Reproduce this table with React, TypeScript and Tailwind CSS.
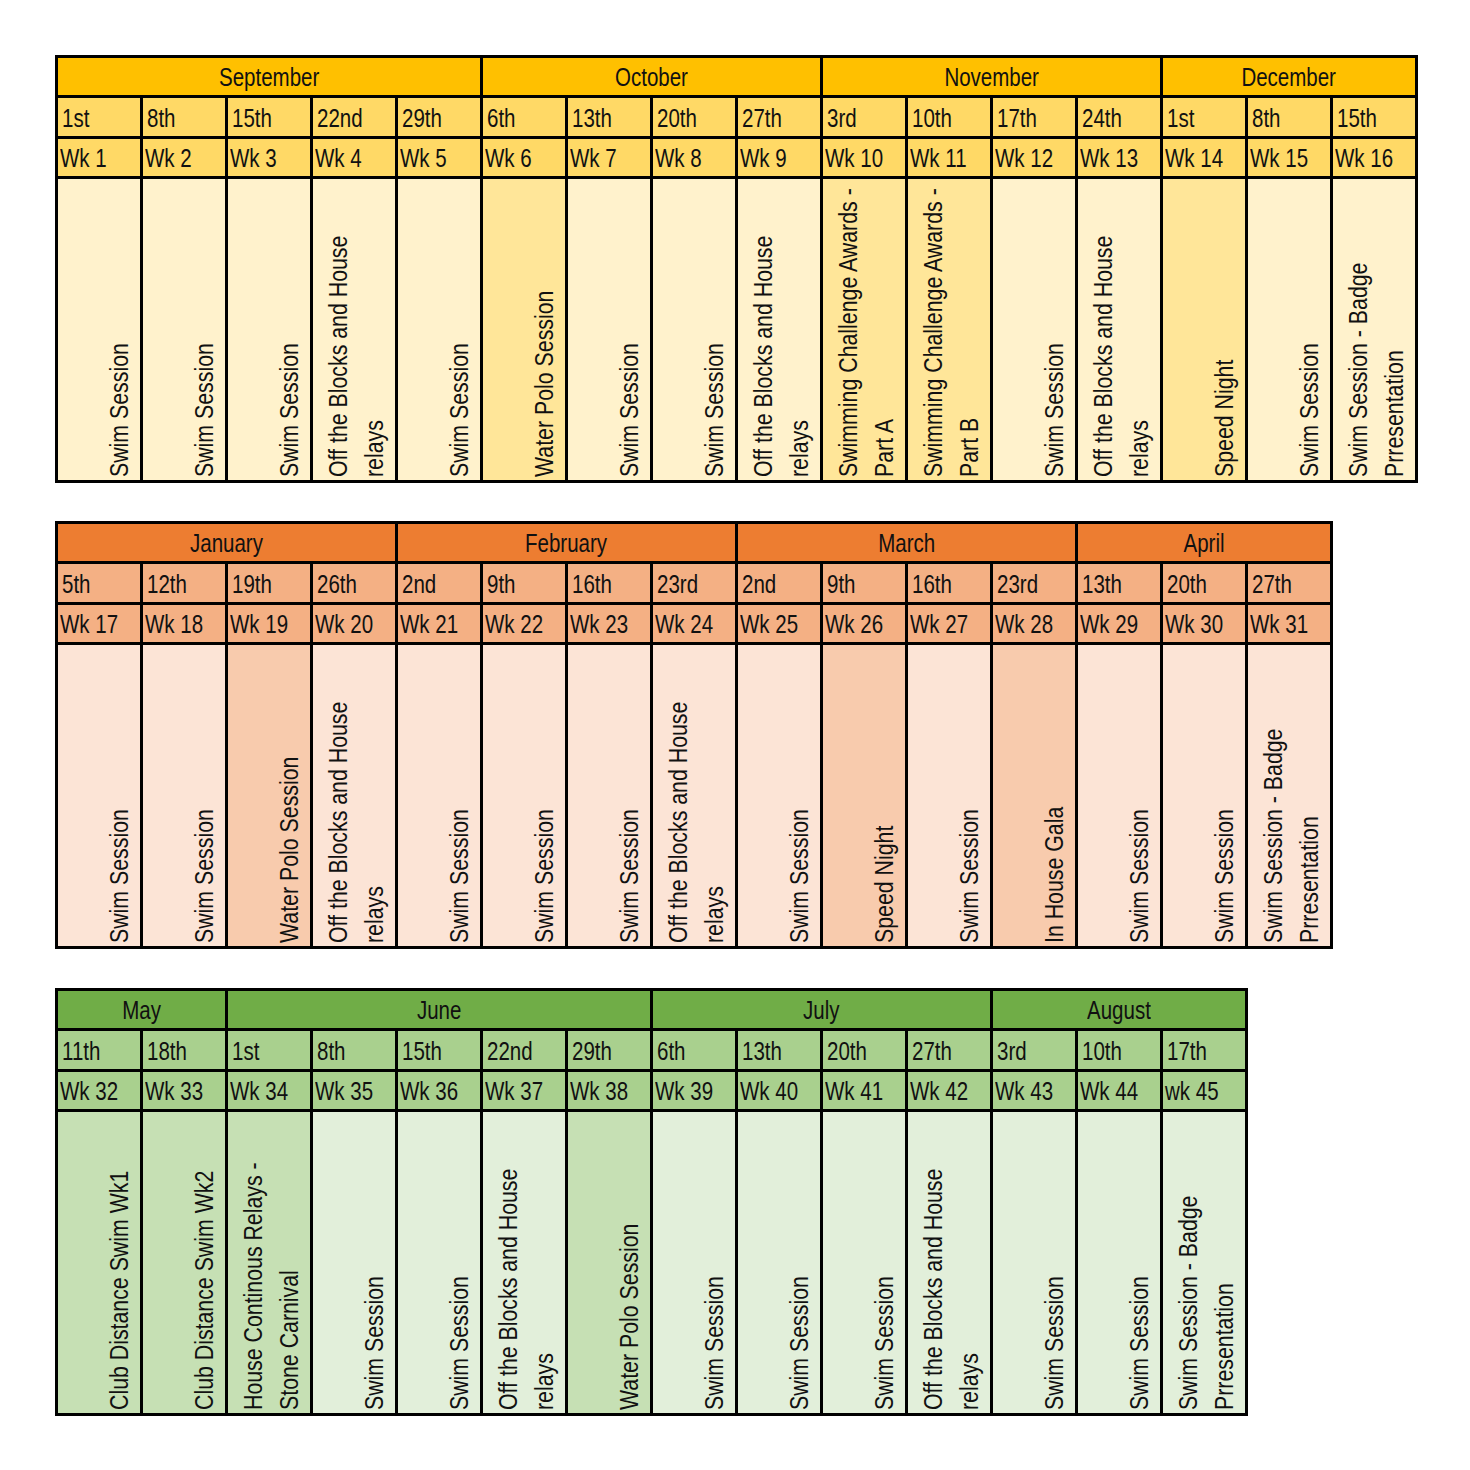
import React from "react";

type Theme = { month: string; row: string; body: string; hl: string };

const yellow: Theme = { month: "bg-[#FFC000]", row: "bg-[#FFD966]", body: "bg-[#FFF2CC]", hl: "bg-[#FFE699]" };
const orange: Theme = { month: "bg-[#ED7D31]", row: "bg-[#F4B084]", body: "bg-[#FCE4D6]", hl: "bg-[#F8CBAD]" };
const green: Theme = { month: "bg-[#70AD47]", row: "bg-[#A9D08E]", body: "bg-[#E2EFDA]", hl: "bg-[#C6E0B4]" };

type Week = { d: string; w: string; t: string[]; hl?: boolean };
type Month = { name: string; weeks: Week[] };

const SS = ["Swim Session"];
const OTB = ["Off the Blocks and House", "relays"];
const BADGE = ["Swim Session - Badge", "Prresentation"];
const WP = ["Water Polo Session"];

const t1: Month[] = [
  {
    name: "September",
    weeks: [
      { d: "1st", w: "Wk 1", t: SS },
      { d: "8th", w: "Wk 2", t: SS },
      { d: "15th", w: "Wk 3", t: SS },
      { d: "22nd", w: "Wk 4", t: OTB },
      { d: "29th", w: "Wk 5", t: SS },
    ],
  },
  {
    name: "October",
    weeks: [
      { d: "6th", w: "Wk 6", t: WP, hl: true },
      { d: "13th", w: "Wk 7", t: SS },
      { d: "20th", w: "Wk 8", t: SS },
      { d: "27th", w: "Wk 9", t: OTB },
    ],
  },
  {
    name: "November",
    weeks: [
      { d: "3rd", w: "Wk 10", t: ["Swimming Challenge Awards -", "Part A"], hl: true },
      { d: "10th", w: "Wk 11", t: ["Swimming Challenge Awards -", "Part B"], hl: true },
      { d: "17th", w: "Wk 12", t: SS },
      { d: "24th", w: "Wk 13", t: OTB },
    ],
  },
  {
    name: "December",
    weeks: [
      { d: "1st", w: "Wk 14", t: ["Speed Night"], hl: true },
      { d: "8th", w: "Wk 15", t: SS },
      { d: "15th", w: "Wk 16", t: BADGE },
    ],
  },
];

const t2: Month[] = [
  {
    name: "January",
    weeks: [
      { d: "5th", w: "Wk 17", t: SS },
      { d: "12th", w: "Wk 18", t: SS },
      { d: "19th", w: "Wk 19", t: WP, hl: true },
      { d: "26th", w: "Wk 20", t: OTB },
    ],
  },
  {
    name: "February",
    weeks: [
      { d: "2nd", w: "Wk 21", t: SS },
      { d: "9th", w: "Wk 22", t: SS },
      { d: "16th", w: "Wk 23", t: SS },
      { d: "23rd", w: "Wk 24", t: OTB },
    ],
  },
  {
    name: "March",
    weeks: [
      { d: "2nd", w: "Wk 25", t: SS },
      { d: "9th", w: "Wk 26", t: ["Speed Night"], hl: true },
      { d: "16th", w: "Wk 27", t: SS },
      { d: "23rd", w: "Wk 28", t: ["In House Gala"], hl: true },
    ],
  },
  {
    name: "April",
    weeks: [
      { d: "13th", w: "Wk 29", t: SS },
      { d: "20th", w: "Wk 30", t: SS },
      { d: "27th", w: "Wk 31", t: BADGE },
    ],
  },
];

const t3: Month[] = [
  {
    name: "May",
    weeks: [
      { d: "11th", w: "Wk 32", t: ["Club Distance Swim Wk1"], hl: true },
      { d: "18th", w: "Wk 33", t: ["Club Distance Swim Wk2"], hl: true },
    ],
  },
  {
    name: "June",
    weeks: [
      { d: "1st", w: "Wk 34", t: ["House Continous Relays -", "Stone Carnival"], hl: true },
      { d: "8th", w: "Wk 35", t: SS },
      { d: "15th", w: "Wk 36", t: SS },
      { d: "22nd", w: "Wk 37", t: OTB },
      { d: "29th", w: "Wk 38", t: WP, hl: true },
    ],
  },
  {
    name: "July",
    weeks: [
      { d: "6th", w: "Wk 39", t: SS },
      { d: "13th", w: "Wk 40", t: SS },
      { d: "20th", w: "Wk 41", t: SS },
      { d: "27th", w: "Wk 42", t: OTB },
    ],
  },
  {
    name: "August",
    weeks: [
      { d: "3rd", w: "Wk 43", t: SS },
      { d: "10th", w: "Wk 44", t: SS },
      { d: "17th", w: "wk 45", t: BADGE },
    ],
  },
];

const spanClass: Record<number, string> = {
  1: "col-span-1",
  2: "col-span-2",
  3: "col-span-3",
  4: "col-span-4",
  5: "col-span-5",
};

function Table({ months, theme, cols }: { months: Month[]; theme: Theme; cols: string }) {
  const weeks = months.flatMap((m) => m.weeks);
  return (
    <div
      className={`grid ${cols} grid-rows-[37px_38px_37px_301px] gap-[3px] bg-black p-[3px] w-fit text-[25px] leading-none text-[#111]`}
    >
      {months.map((m) => (
        <div
          key={m.name}
          className={`${spanClass[m.weeks.length]} ${theme.month} flex items-center justify-center pt-[1px]`}
        >
          <span className="inline-block scale-x-[0.82] origin-center whitespace-nowrap">{m.name}</span>
        </div>
      ))}
      {weeks.map((w, i) => (
        <div key={"d" + i} className={`${theme.row} flex items-center pl-[4px] pt-[2px] overflow-hidden`}>
          <span className="inline-block scale-x-[0.82] origin-left whitespace-nowrap">{w.d}</span>
        </div>
      ))}
      {weeks.map((w, i) => (
        <div key={"w" + i} className={`${theme.row} flex items-center pl-[2px] pt-[2px] overflow-hidden`}>
          <span className="inline-block scale-x-[0.82] origin-left whitespace-nowrap">{w.w}</span>
        </div>
      ))}
      {weeks.map((w, i) => (
        <div key={"b" + i} className={`${w.hl ? theme.hl : theme.body} flex justify-end overflow-hidden`}>
          <div className="[writing-mode:vertical-rl] rotate-180 h-full pt-[3px] pl-[3px] text-[26px] leading-[36px] whitespace-nowrap">
            {w.t.map((line, j) => (
              <div key={j} className="origin-top scale-y-[0.82]">
                {line}
              </div>
            ))}
          </div>
        </div>
      ))}
    </div>
  );
}

export default function App() {
  return (
    <div className="min-h-[1470px] w-[1470px] bg-white pt-[55px] pl-[55px] font-['Liberation_Sans','Arial',sans-serif]">
      <Table months={t1} theme={yellow} cols="grid-cols-[repeat(16,82px)]" />
      <div className="mt-[38px]">
        <Table months={t2} theme={orange} cols="grid-cols-[repeat(15,82px)]" />
      </div>
      <div className="mt-[39px]">
        <Table months={t3} theme={green} cols="grid-cols-[repeat(14,82px)]" />
      </div>
    </div>
  );
}
